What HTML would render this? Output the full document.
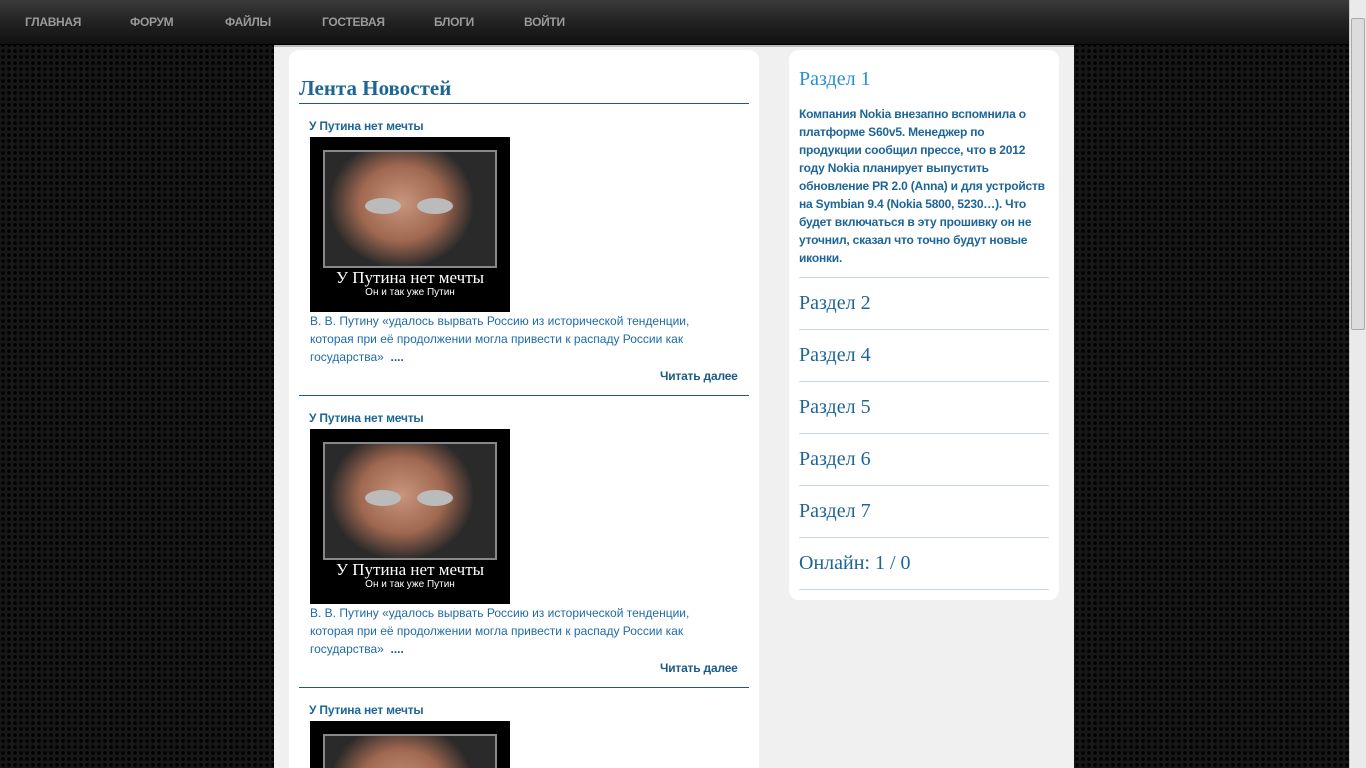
<!DOCTYPE html>
<html style="width:1366px;height:768px;overflow:hidden"><head><meta charset="utf-8"><style>
*{margin:0;padding:0;box-sizing:border-box}
html,body{width:1366px;height:768px;overflow:hidden}
body{position:relative;font-family:"Liberation Sans","Noto Sans CJK SC",sans-serif;
background-color:#111;background-image:radial-gradient(circle at 3px 3px,#000 1.6px,#1e1e1e 2.4px,#151515 3.2px);background-size:6px 6px}
.nav{position:absolute;left:0;top:0;width:1349px;height:45px;background:linear-gradient(#3a3a3a,#222 50%,#111);border-bottom:1px solid #000}
.nav span{position:absolute;top:15px;font-size:12px;font-weight:bold;color:#9a9a9a;letter-spacing:-0.3px}
.wrap{position:absolute;left:274px;top:45px;width:800px;height:723px;background:#f0f0f0;border-top:2px solid #bbb}
.left{position:absolute;left:289px;top:50px;width:470px;height:718px;background:#fff;border-radius:10px 10px 0 0}
.right{position:absolute;left:789px;top:50px;width:270px;height:550px;background:#fff;border-radius:10px}
h1{position:absolute;left:299px;top:76px;font-family:"Liberation Serif",serif;font-size:21px;color:#1d6596;font-weight:bold}
.hr{position:absolute;left:299px;width:450px;height:1px;background:#1d5a85}
.t{position:absolute;left:309px;font-size:12px;font-weight:bold;color:#1d6596;letter-spacing:-0.2px}
.img{position:absolute;left:310px;width:200px;height:175px;background:#000;overflow:hidden}
.ph{position:absolute;left:13px;top:13px;width:174px;height:118px;border:2px solid #888;background:radial-gradient(ellipse 45% 60% at 45% 45%,#c8957d,#a06850 55%,#2a2a2a 95%),#555}
.gl{position:absolute;top:46px;width:36px;height:16px;border-radius:50%;background:#bbb}
.c1{position:absolute;top:131px;width:100%;text-align:center;color:#fff;font-family:"Liberation Serif",serif;font-size:17px}
.c2{position:absolute;top:150px;width:100%;text-align:center;color:#fff;font-size:10px}
.p{position:absolute;left:310px;width:420px;font-size:12px;line-height:18px;color:#1e6aa8}
.p b{color:#1d5a85}
.more{position:absolute;left:660px;font-size:12px;font-weight:bold;color:#1d5a85;letter-spacing:-0.2px}
.r{position:absolute;left:799px;font-family:"Liberation Serif",serif;font-size:20px;color:#1d6596}
.rh{position:absolute;left:799px;width:250px;height:1px;background:#ccd8e0}
.rp{position:absolute;left:799px;top:105px;width:260px;font-size:12px;line-height:18px;font-weight:bold;color:#1d6596;letter-spacing:-0.2px;white-space:nowrap}
.sb{position:absolute;left:1349px;top:0;width:17px;height:768px;background:#eaeaea;border-left:1px solid #ccc}
.th{position:absolute;left:1351px;top:18px;width:14px;height:312px;background:#dcdcdc;border:1px solid #aaa;border-radius:2px}
</style></head><body>
<div class="nav"><span style="left:25px">ГЛАВНАЯ</span><span style="left:130px">ФОРУМ</span><span style="left:225px">ФАЙЛЫ</span><span style="left:322px">ГОСТЕВАЯ</span><span style="left:434px">БЛОГИ</span><span style="left:524px">ВОЙТИ</span></div>
<div class="wrap"></div>
<div class="left"></div>
<div class="right"></div>
<h1>Лента Новостей</h1>
<div class="hr" style="top:103px"></div>

<div class="t" style="top:119px">У Путина нет мечты</div>
<div class="img" style="top:137px"><div class="ph"><div class="gl" style="left:40px"></div><div class="gl" style="left:92px"></div></div><div class="c1">У Путина нет мечты</div><div class="c2">Он и так уже Путин</div></div>
<div class="p" style="top:312px">В. В. Путину «удалось вырвать Россию из исторической тенденции, которая при её продолжении могла привести к распаду России как государства» &nbsp;<b>....</b></div>
<div class="more" style="top:369px">Читать далее</div>
<div class="hr" style="top:395px"></div>

<div class="t" style="top:411px">У Путина нет мечты</div>
<div class="img" style="top:429px"><div class="ph"><div class="gl" style="left:40px"></div><div class="gl" style="left:92px"></div></div><div class="c1">У Путина нет мечты</div><div class="c2">Он и так уже Путин</div></div>
<div class="p" style="top:604px">В. В. Путину «удалось вырвать Россию из исторической тенденции, которая при её продолжении могла привести к распаду России как государства» &nbsp;<b>....</b></div>
<div class="more" style="top:661px">Читать далее</div>
<div class="hr" style="top:687px"></div>

<div class="t" style="top:703px">У Путина нет мечты</div>
<div class="img" style="top:721px;height:47px"><div class="ph"><div class="gl" style="left:40px"></div><div class="gl" style="left:92px"></div></div></div>

<div class="r" style="top:68px;color:#2a8fd6">Раздел 1</div>
<div class="rp">Компания Nokia внезапно вспомнила о<br>платформе S60v5. Менеджер по<br>продукции сообщил прессе, что в 2012<br>году Nokia планирует выпустить<br>обновление PR 2.0 (Anna) и для устройств<br>на Symbian 9.4 (Nokia 5800, 5230…). Что<br>будет включаться в эту прошивку он не<br>уточнил, сказал что точно будут новые<br>иконки.</div>
<div class="rh" style="top:277px"></div>
<div class="r" style="top:292px">Раздел 2</div><div class="rh" style="top:329px"></div>
<div class="r" style="top:344px">Раздел 4</div><div class="rh" style="top:381px"></div>
<div class="r" style="top:396px">Раздел 5</div><div class="rh" style="top:433px"></div>
<div class="r" style="top:448px">Раздел 6</div><div class="rh" style="top:485px"></div>
<div class="r" style="top:500px">Раздел 7</div><div class="rh" style="top:537px"></div>
<div class="r" style="top:552px">Онлайн: 1 / 0</div><div class="rh" style="top:589px"></div>
<div class="sb"></div><div class="th"></div>
</body></html>
